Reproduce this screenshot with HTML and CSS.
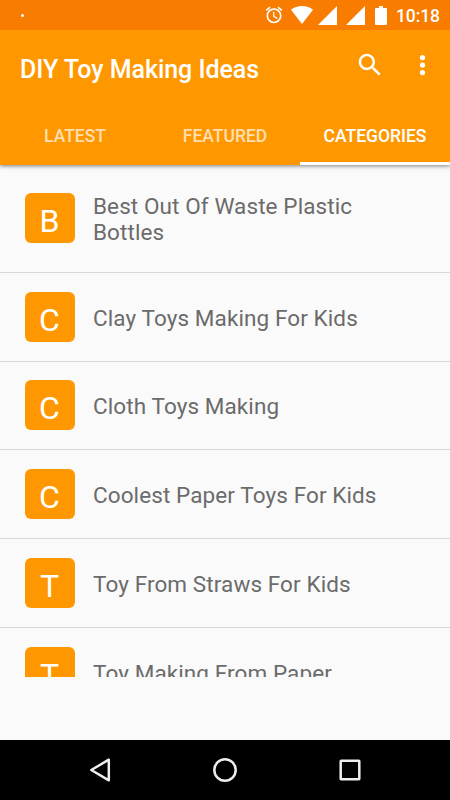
FILE: index.html
```html
<!DOCTYPE html>
<html lang="en">
<head>
<meta charset="utf-8">
<title>DIY Toy Making Ideas</title>
<link rel="stylesheet" href="styles.css">
</head>
<body>
<div class="status">
  <span class="notice"></span>
  <svg class="alarm" width="20" height="20" viewBox="0 0 24 24"><path d="M22 5.72l-4.6-3.86-1.29 1.53 4.6 3.86L22 5.72zM7.88 3.39L6.6 1.86 2 5.71l1.29 1.53 4.59-3.85zM12.5 8H11v6l4.75 2.85.75-1.23-4-2.37V8zM12 4c-4.97 0-9 4.03-9 9s4.02 9 9 9c4.97 0 9-4.03 9-9s-4.03-9-9-9zm0 16c-3.87 0-7-3.13-7-7s3.13-7 7-7 7 3.13 7 7-3.13 7-7 7z"/></svg>
  <svg class="wifi" width="22" height="18" viewBox="0 0 22 18"><path d="M0 3.7C6-1.2 16-1.2 22 3.7L11 18z"/></svg>
  <svg class="signal" width="19" height="19" viewBox="0 0 19 19"><path d="M0 19L19 0v19z"/></svg>
  <svg class="signal second" width="19" height="19" viewBox="0 0 19 19"><path d="M0 19L19 0v19z"/></svg>
  <svg class="battery" width="12" height="19" viewBox="0 0 12 19"><path d="M4 0h4v2h3q1 0 1 1v15q0 1-1 1H1q-1 0-1-1V3q0-1 1-1h3z"/></svg>
  <span class="time">10:18</span>
</div>
<header class="appbar">
  <div class="toolbar">
    <h1>DIY Toy Making Ideas</h1>
    <svg class="search" width="30" height="30" viewBox="0 0 24 24"><path d="M15.5 14h-.79l-.28-.27C15.41 12.59 16 11.11 16 9.5 16 5.91 13.09 3 9.5 3S3 5.91 3 9.5 5.91 16 9.5 16c1.61 0 3.09-.59 4.23-1.57l.27.28v.79l5 4.99L20.49 19l-4.99-5zm-6 0C7.01 14 5 11.99 5 9.5S7.01 5 9.5 5 14 7.01 14 9.5 11.99 14 9.5 14z"/></svg>
    <svg class="more" width="30" height="30" viewBox="0 0 24 24"><circle cx="11.600" cy="6" r="2.100"/><circle cx="11.600" cy="12" r="2.100"/><circle cx="11.600" cy="18" r="2.100"/></svg>
  </div>
  <nav class="tabs">
    <span class="tab">LATEST</span>
    <span class="tab">FEATURED</span>
    <span class="tab active">CATEGORIES</span>
  </nav>
</header>
<main class="list">
  <div class="row first"><span class="badge"><b>B</b></span><span class="label">Best Out Of Waste Plastic Bottles</span></div>
  <div class="row"><span class="badge"><b>C</b></span><span class="label">Clay Toys Making For Kids</span></div>
  <div class="row"><span class="badge"><b>C</b></span><span class="label">Cloth Toys Making</span></div>
  <div class="row"><span class="badge"><b>C</b></span><span class="label">Coolest Paper Toys For Kids</span></div>
  <div class="row"><span class="badge"><b>T</b></span><span class="label">Toy From Straws For Kids</span></div>
  <div class="row"><span class="badge"><b>T</b></span><span class="label">Toy Making From Paper</span></div>
</main>
<footer class="navbar">
  <svg width="30" height="30" viewBox="0 0 30 30"><path d="M6.300 15L23.800 4.700v20.600z"/></svg>
  <svg width="30" height="30" viewBox="0 0 30 30"><circle cx="15" cy="15" r="10.700"/></svg>
  <svg width="30" height="30" viewBox="0 0 30 30"><rect x="5.700" y="5.700" width="18.600" height="18.600" rx=".5"/></svg>
</footer>
</body>
</html>
```
FILE: styles.css
```css
* { box-sizing: border-box; }
body {
  margin: 0;
  width: 450px;
  height: 800px;
  overflow: hidden;
  display: flex;
  flex-direction: column;
  background: #fafafa;
  font-family: Roboto, "Liberation Sans", sans-serif;
}
svg { display: block; flex: none; }
.status {
  height: 30px;
  flex: none;
  position: relative;
  z-index: 1;
  display: flex;
  align-items: center;
  padding-right: 10px;
  background: #f77c00;
  fill: #fff;
  color: #fff;
}
.notice {
  width: 3px;
  height: 3px;
  margin: 0 auto 0 21px;
  border-radius: 50%;
  background: #fff;
}
.wifi { margin-left: 7px; }
.signal { margin-left: 5px; }
.signal.second { margin-left: 9px; }
.battery { margin-left: 10px; }
.time {
  width: 44px;
  margin-left: 9px;
  padding-top: 2px;
  font-size: 17.5px;
  font-weight: 500;
  line-height: 30px;
  letter-spacing: -.1px;
  white-space: nowrap;
}
.appbar {
  height: 135px;
  flex: none;
  background: #ff9800;
  box-shadow: 0 1px 4px rgba(0, 0, 0, .5);
}
.toolbar {
  height: 75px;
  display: flex;
  align-items: flex-start;
  padding: 20px 12.500px 0 20px;
  fill: #fff;
}
h1 {
  flex: 1;
  margin: 5px 0 0;
  font-size: 25px;
  line-height: 30px;
  font-weight: 500;
  letter-spacing: -.04px;
  color: #fff;
  white-space: nowrap;
}
.more { margin-left: 22.500px; }
.tabs {
  display: grid;
  grid-template-columns: repeat(3, 150px);
  height: 60px;
}
.tab {
  display: flex;
  align-items: center;
  justify-content: center;
  padding-top: 5px;
  border-bottom: 3px solid transparent;
  font-size: 17.5px;
  font-weight: 500;
  color: rgba(255, 255, 255, .7);
}
.tab.active {
  color: #fff;
  border-bottom-color: #fff;
}
.list {
  height: 512px;
  flex: none;
  overflow: hidden;
}
.row {
  height: 88.750px;
  display: flex;
  align-items: center;
  padding: 0 60px 0 24.500px;
  border-bottom: 1px solid #d9d9d9;
}
.row.first {
  height: 107.800px;
  padding-bottom: 1px;
}
.badge {
  width: 50px;
  height: 50px;
  flex: none;
  display: flex;
  justify-content: center;
  border-radius: 6px;
  background: #ff9800;
}
.badge b {
  font-size: 32px;
  font-weight: 400;
  line-height: 57px;
  color: #fff;
}
.label {
  margin-left: 18.500px;
  padding-top: 2px;
  font-size: 22.500px;
  line-height: 26px;
  letter-spacing: .1px;
  color: #6b6b6b;
}
.navbar {
  height: 60px;
  flex: none;
  margin-top: auto;
  display: flex;
  justify-content: space-between;
  align-items: center;
  padding: 0 85px;
  background: #000;
  fill: none;
  stroke: #eee;
  stroke-width: 2.500px;
  stroke-linejoin: round;
}
```
